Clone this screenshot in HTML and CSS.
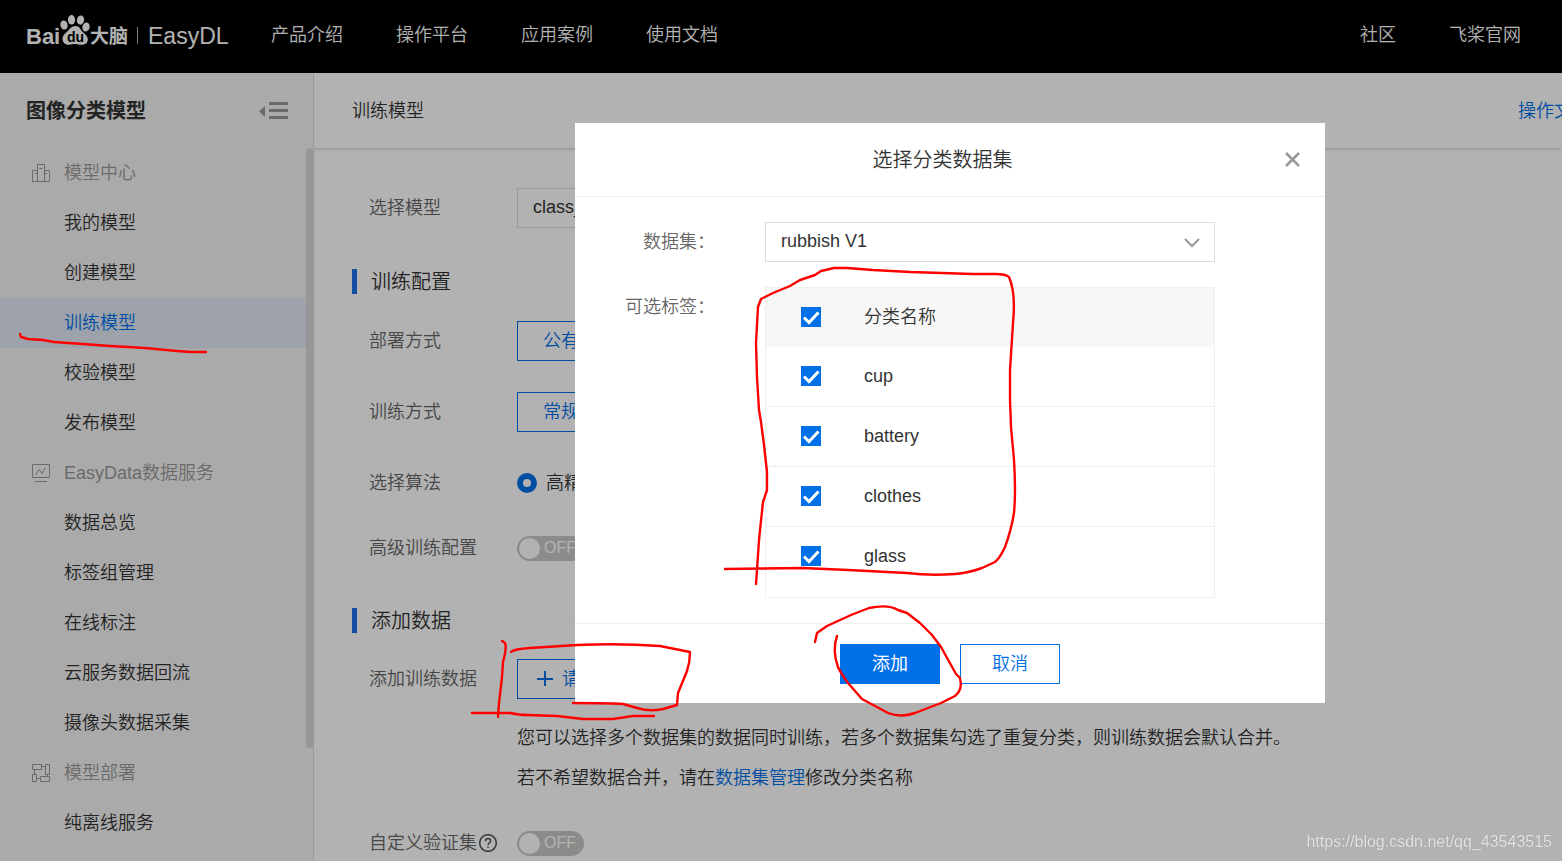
FILE: index.html
```html
<!DOCTYPE html>
<html lang="zh-CN">
<head>
<meta charset="utf-8">
<meta name="viewport" content="width=device-width, initial-scale=1">
<title>EasyDL 训练模型</title>
<link rel="stylesheet" href="styles.css">
</head>
<body>
<header class="topbar">
  <a class="logo" href="#" aria-label="Baidu大脑 EasyDL">
    <svg width="204" height="40" viewBox="0 0 204 40" fill="#fff">
      <text class="logo-latin" x="0" y="29">Bai</text>
      <ellipse cx="38" cy="10" rx="3.600" ry="4.600" transform="rotate(-12 38 10)"/>
      <ellipse cx="45.500" cy="4.800" rx="3.600" ry="4.800"/>
      <ellipse cx="54.500" cy="5" rx="3.600" ry="4.600" transform="rotate(10 54 5)"/>
      <ellipse cx="60" cy="12" rx="3.600" ry="4.600" transform="rotate(15 60 12)"/>
      <path d="M49.500 11c-4 0-5.500 3-8 5.200-3 2.600-5.200 4.800-4.900 8.300.3 3.400 3 5.500 6.400 5.200 2.600-.2 4-.8 6.500-.8s4.500 1 7 .8c3.200-.2 5.300-2.200 5.300-5.200 0-3.700-3.300-5.700-5.600-8C54 14 53.500 11 49.500 11z"/>
      <text class="logo-du" x="41" y="27">du</text>
      <text class="logo-cjk" x="64" y="28">大脑</text>
      <path d="M111 12h1v17h-1z" opacity=".7"/>
      <text class="logo-product" x="122" y="29">EasyDL</text>
    </svg>
  </a>
  <nav class="nav">
    <a href="#">产品介绍</a><a href="#">操作平台</a><a href="#">应用案例</a><a href="#">使用文档</a>
  </nav>
  <nav class="nav nav-right"><a href="#">社区</a><a href="#">飞桨官网</a></nav>
</header>

<div class="layout">
  <aside class="sidebar">
    <div class="side-head">
      <h1>图像分类模型</h1>
      <button class="collapse" type="button" aria-label="收起菜单">
        <svg width="30" height="18" viewBox="0 0 30 18" fill="#999"><path d="M0 9.500 6 4v11zM10 0h19v3H10zM10 7h19v3H10zM10 14h19v3H10z"/></svg>
      </button>
    </div>
    <div class="side-body">
      <ul class="menu">
        <li class="group"><svg width="18" height="18" viewBox="0 0 18 18"><path d="M.5 6.500h5v11h-5zM5.500.500h7v17h-7zM12.500 6.500h5v11h-5zM7.500 4.500h3M3 9.500h2M13 9.500h2"/></svg>模型中心</li>
        <li><a href="#">我的模型</a></li>
        <li><a href="#">创建模型</a></li>
        <li class="active"><a href="#">训练模型</a></li>
        <li><a href="#">校验模型</a></li>
        <li><a href="#">发布模型</a></li>
        <li class="group"><svg width="18" height="18" viewBox="0 0 18 18"><path d="M.5.500h17v13H.500zM3 17.500h12M4 10.500l3-5 3 4 3-5M3.500 10.500h1M12.500 4.500h1"/></svg>EasyData数据服务</li>
        <li><a href="#">数据总览</a></li>
        <li><a href="#">标签组管理</a></li>
        <li><a href="#">在线标注</a></li>
        <li><a href="#">云服务数据回流</a></li>
        <li><a href="#">摄像头数据采集</a></li>
        <li class="group"><svg width="18" height="18" viewBox="0 0 18 18"><path d="M.5.500h9v5h-9zM13.500.500h4v10h-4zM.5 10.500h4v7h-4zM8.500 12.500h9v5h-9zM9.500 2.500h4M2.500 5.500v5M4.500 14.500h4M15.500 10.500v2"/></svg>模型部署</li>
        <li><a href="#">纯离线服务</a></li>
      </ul>
      <div class="scroll-thumb"></div>
    </div>
  </aside>

  <main class="main">
    <div class="page-head"><h2>训练模型</h2><a class="doc-link" href="#">操作文档</a></div>
    <form class="form">
      <div class="row">
        <label for="model">选择模型</label>
        <select id="model" class="select"><option>class_</option></select>
      </div>
      <h3 class="section">训练配置</h3>
      <div class="row"><span class="label">部署方式</span><button class="outline" type="button">公有云API</button></div>
      <div class="row spaced"><span class="label">训练方式</span><button class="outline" type="button">常规训练</button></div>
      <div class="row spaced">
        <span class="label">选择算法</span>
        <input class="radio" type="radio" id="algo" name="algo" checked><label class="radio-text" for="algo">高精度</label>
      </div>
      <div class="row close">
        <label for="advanced">高级训练配置</label>
        <span class="switch"><input id="advanced" type="checkbox" role="switch"><span aria-hidden="true">OFF</span></span>
      </div>
      <h3 class="section">添加数据</h3>
      <div class="row">
        <span class="label">添加训练数据</span>
        <button class="outline add" type="button"><svg width="16" height="16" viewBox="0 0 16 16"><path d="M8 0v15M0 8h16"/></svg>请选择</button>
      </div>
      <div class="notes">
        <p>您可以选择多个数据集的数据同时训练，若多个数据集勾选了重复分类，则训练数据会默认合并。</p>
        <p>若不希望数据合并，请在<a href="#">数据集管理</a>修改分类名称</p>
      </div>
      <div class="row close">
        <label for="verify">自定义验证集<svg class="help" width="18" height="18" viewBox="0 0 18 18"><circle cx="9" cy="9" r="8.300"/><path d="M6.500 7.200C6.500 5.500 7.500 4.600 9 4.600s2.600.9 2.600 2.300c0 1.800-2.500 2-2.500 4M9 12.500v1.500"/></svg></label>
        <span class="switch"><input id="verify" type="checkbox" role="switch"><span aria-hidden="true">OFF</span></span>
      </div>
    </form>
  </main>
</div>

<div class="backdrop"></div>
<section class="modal" role="dialog" aria-modal="true" aria-labelledby="dialog-title">
  <header class="modal-head">
    <h2 id="dialog-title">选择分类数据集</h2>
    <button class="dismiss" type="button" aria-label="关闭"><svg width="15" height="15" viewBox="0 0 15 15"><path d="M1 1l13 13M14 1L1 14"/></svg></button>
  </header>
  <div class="modal-body">
    <div class="field">
      <label for="dataset">数据集：</label>
      <div class="select-wrap">
        <select id="dataset" class="select"><option>rubbish V1</option></select>
        <svg class="chevron" width="16" height="10" viewBox="0 0 16 10"><path d="M1 1l7 7 7-7"/></svg>
      </div>
    </div>
    <div class="field">
      <span class="field-name">可选标签：</span>
      <div class="table-box">
        <table>
          <thead><tr><th><input type="checkbox" id="all" checked></th><th><label for="all">分类名称</label></th></tr></thead>
          <tbody>
            <tr><td><input type="checkbox" id="cup" checked></td><td><label for="cup">cup</label></td></tr>
            <tr><td><input type="checkbox" id="battery" checked></td><td><label for="battery">battery</label></td></tr>
            <tr><td><input type="checkbox" id="clothes" checked></td><td><label for="clothes">clothes</label></td></tr>
            <tr><td><input type="checkbox" id="glass" checked></td><td><label for="glass">glass</label></td></tr>
          </tbody>
        </table>
      </div>
    </div>
  </div>
  <footer class="modal-foot">
    <button class="primary" type="button">添加</button>
    <button class="secondary" type="button">取消</button>
  </footer>
</section>

<svg class="ink" width="1562" height="861" viewBox="0 0 1562 861" stroke-width="2.400" aria-hidden="true">
  <path d="M20 334L21 337 28 339 43 340 54 342 83 344 110 346 145 348 177 351 190 352 206 352"/>
  <path d="M756 584L759 540 763 502 767 490 767 472 764 445 761 422 759 410 757 377 756 343 758 307 761 299 773 293 790 286 800 280 815 275 821 271 834 268 847 268 873 270 910 272 973 274 995 274Q1006 274 1009 277Q1016 293 1013 323L1010 370 1010 400 1011 427 1014 460Q1016 492 1014 513Q1011 531 1005 547Q1000 558 995 562L982 568Q968 573 955 574Q930 576 907 573L848 570 803 568 725 569"/>
  <path d="M502 641L505 643Q507 648 503 662L502 677 499 703 498 717M511 652Q514 649 530 648L577 645Q620 643 660 646L690 652Q690 662 687 671L678 693 677 705 663 709Q650 712 637 708L623 704Q613 703 573 703M472 713L510 713Q520 715 527 715L557 716 583 719 613 719 633 716 654 716"/>
  <path d="M815 642L817 633 827 626 851 615 869 608Q888 604 898 610L907 613 920 623 926 629 932 635 941 647 956 674 960 678Q963 690 955 696L941 703 915 713Q901 718 888 713L862 699 848 683Q840 672 838 667Q832 650 837 636"/>
</svg>
<div class="watermark">https://blog.csdn.net/qq_43543515</div>
</body>
</html>
```
FILE: styles.css
```css
* { box-sizing: border-box; }
body {
  margin: 0;
  min-height: 100vh;
  overflow: hidden;
  background: #fff;
  color: #333;
  font: 350 18px/26px "Liberation Sans", "Noto Sans CJK SC", sans-serif;
}
h1, h2, h3, p, ul { margin: 0; padding: 0; font-size: inherit; font-weight: inherit; }
ul { list-style: none; }
a { color: inherit; text-decoration: none; }
button, input, select { margin: 0; padding: 0; font: inherit; color: inherit; }
button { cursor: pointer; }
svg { display: block; flex: none; }

.topbar { display: flex; align-items: center; height: 73px; padding: 0 41px 4px 26px; background: #000; color: #fff; }
.logo { margin-right: 41px; }
.logo-latin { font: 700 22px "Liberation Sans", sans-serif; }
.logo-du { font: 700 14px "Liberation Sans", sans-serif; fill: #000; }
.logo-cjk { font: 700 19px "Noto Sans CJK SC", sans-serif; }
.logo-product { font: 400 23px "Liberation Sans", sans-serif; }
.nav { display: flex; gap: 53px; }
.nav-right { margin-left: auto; }

.layout { display: flex; height: calc(100vh - 73px); }
.sidebar { display: flex; flex-direction: column; width: 314px; flex: none; background: #f4f4f4; border-right: 1px solid #dcdcdc; }
.side-head { display: flex; align-items: center; justify-content: space-between; height: 75px; flex: none; padding: 0 24px 0 26px; }
.side-head h1 { font-size: 20px; font-weight: 700; }
.collapse { border: 0; background: none; }
.side-body { display: flex; flex: 1; min-height: 0; overflow: hidden; }
.menu { flex: 1; line-height: 50px; }
.menu li { height: 50px; padding-left: 64px; }
.menu a { display: block; }
.menu .group { display: flex; align-items: center; gap: 14px; padding-left: 32px; color: #999; }
.menu .group svg { fill: none; stroke: #999; }
.menu .active { background: #e2e9f5; color: #0070e8; }
.scroll-thumb { width: 7px; height: 600px; border-radius: 4px; background: #d8d8d8; }

.main { flex: 1; min-width: 0; overflow: hidden; }
.page-head { display: flex; align-items: center; justify-content: space-between; height: 75px; padding-left: 38px; box-shadow: 0 1px 3px #ccc; }
.doc-link { margin-right: -28px; white-space: nowrap; color: #0070e8; }
.form { padding: 40px 38px 0; }
.row { display: flex; align-items: center; height: 40px; padding-left: 17px; }
.row > label:first-child, .label { display: flex; align-items: center; gap: 2px; width: 148px; flex: none; color: #666; white-space: nowrap; }
.spaced { margin-top: 31px; }
.close { margin-top: 25px; }
.section { height: 25px; margin: 41px 0 27px; padding-left: 14px; border-left: 5px solid #1a6fe8; font-size: 20px; line-height: 27px; }
.close + .section { margin: 40px 0 26px; }
.select { width: 450px; height: 40px; padding: 0 15px 2px; border: 1px solid #dcdcdc; border-radius: 0; appearance: none; background: #fff; }
.outline { width: 180px; height: 40px; padding-left: 25px; border: 1px solid #0070e8; background: #fff; color: #0070e8; text-align: left; }
.add { display: flex; align-items: center; gap: 9px; padding-left: 19px; }
.add svg { fill: none; stroke: #0070e8; stroke-width: 2; }
.radio { width: 20px; height: 20px; border: 6px solid #0070e8; border-radius: 50%; appearance: none; }
.radio-text { margin-left: 9px; }
.switch { display: flex; align-items: center; width: 67px; height: 25px; padding: 2px; border-radius: 13px; background: #c8c8c8; color: #fff; font-size: 16px; }
.switch input { width: 21px; height: 21px; margin-right: 4px; border-radius: 50%; appearance: none; background: #fff; }
.notes { margin-top: 19px; padding-left: 165px; line-height: 40px; }
.notes p { white-space: nowrap; }
.notes a { color: #0070e8; }
.help { fill: none; stroke: #555; stroke-width: 1.5; }

.backdrop { position: fixed; inset: 0; background: rgba(0, 0, 0, .3); }
.modal { position: fixed; top: 123px; right: 237px; width: 750px; background: #fff; }
.modal-head { display: grid; grid-template-columns: 1fr auto 1fr; align-items: center; height: 74px; padding: 0 25px 0 10px; border-bottom: 1px solid #eee; }
.modal-head h2 { grid-column: 2; font-size: 20px; }
.dismiss { justify-self: end; border: 0; background: none; }
.dismiss svg { fill: none; stroke: #999; stroke-width: 2.5; }
.modal-body { display: grid; gap: 25px; padding: 25px 0; }
.field { display: grid; grid-template-columns: 140px 450px; column-gap: 50px; line-height: 40px; }
.field > label, .field-name { color: #666; text-align: right; }
.select-wrap { position: relative; height: 40px; }
.select-wrap .select { display: block; line-height: 26px; }
.chevron { position: absolute; top: 16px; right: 15px; fill: none; stroke: #999; stroke-width: 2; pointer-events: none; }
.table-box { height: 311px; overflow: hidden; border: 1px solid #eee; }
table { width: 100%; border-spacing: 0; table-layout: fixed; line-height: 26px; }
th, td { height: 60px; padding: 0 0 2px; text-align: left; font-weight: inherit; border-bottom: 1px solid #eee; }
th { height: 59px; border: 0; background: #f7f7f7; }
tr:last-child td { border-color: transparent; }
th:first-child, td:first-child { width: 98px; padding-left: 35px; }
table input {
  display: block;
  width: 20px;
  height: 20px;
  appearance: none;
  background: #0070e8 url("data:image/svg+xml,%3Csvg xmlns='http://www.w3.org/2000/svg' viewBox='0 0 20 20'%3E%3Cpath d='M3 10.500l5 5L17.500 5.500' fill='none' stroke='white' stroke-width='3'/%3E%3C/svg%3E");
}
.modal-foot { display: flex; justify-content: center; gap: 20px; padding: 20px 0 19px; border-top: 1px solid #eee; }
.modal-foot button { width: 100px; height: 40px; border: 1px solid #0070e8; }
.primary { background: #0070e8; color: #fff; font-weight: 400; }
.secondary { background: #fff; color: #0070e8; }

.ink { position: fixed; top: 0; left: 0; fill: none; stroke: #f00; stroke-linecap: round; stroke-linejoin: round; pointer-events: none; }
.watermark { position: fixed; right: 10px; bottom: 6px; color: #e4e4e4; font-size: 16px; text-shadow: 0 0 1px #888; }
```
